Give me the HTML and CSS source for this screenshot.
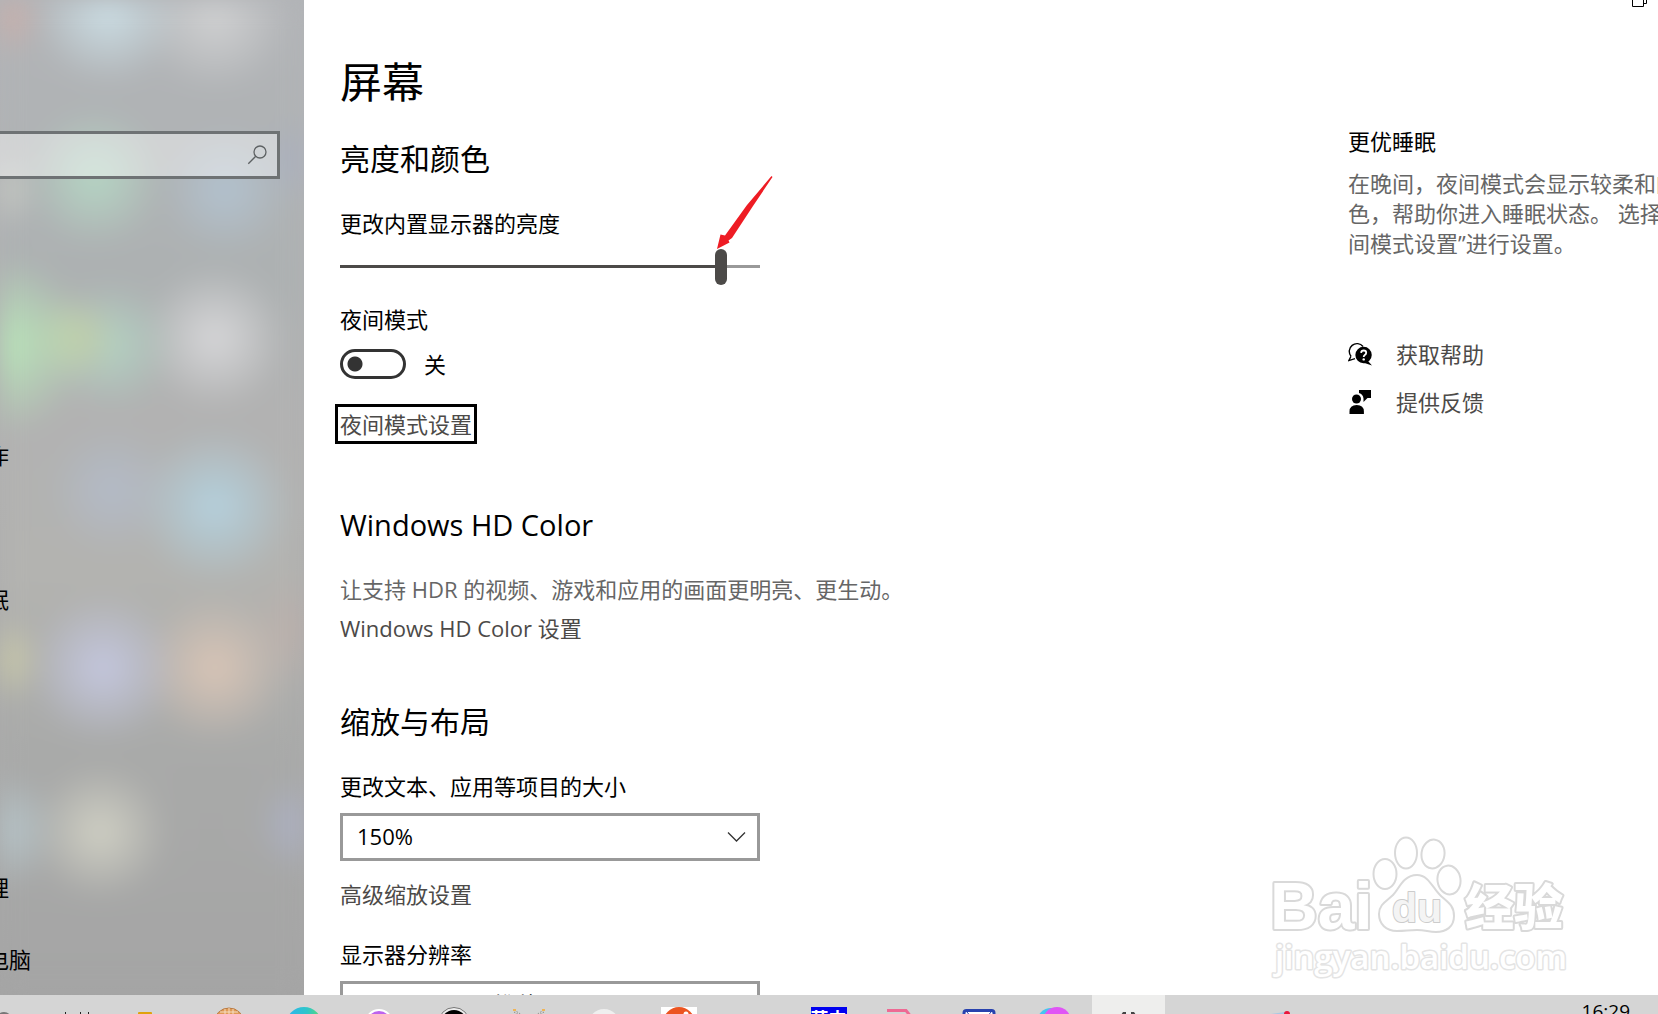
FILE: index.html
```html
<!DOCTYPE html>
<html lang="zh-CN">
<head>
    <meta charset="UTF-8">
    <meta name="viewport" content="width=device-width, initial-scale=1.0">
    <title>设置</title>
    <link rel="stylesheet" href="styles.css">
</head>
<body>
    <div class="window">
        <aside class="sidebar">
            <div class="search-box">
                <input type="text" aria-label="查找设置">
                <button class="search-btn" aria-label="搜索">
                    <svg width="20" height="20" viewBox="0 0 20 20" fill="none" stroke="#5d6163" stroke-width="1.3">
                        <circle cx="13" cy="7" r="6"/>
                        <path d="M8.7 11.3L1.3 18.7"/>
                    </svg>
                </button>
            </div>
            <nav class="nav">
                <a href="#">通知和操作</a>
                <a href="#">专注助手</a>
                <a href="#">电源和睡眠</a>
                <a href="#">电池</a>
                <a href="#">存储</a>
                <a href="#">平板模式</a>
                <a href="#">多任务处理</a>
                <a href="#">投影到此电脑</a>
            </nav>
        </aside>

        <div class="page">
            <div class="titlebar">
                <button class="restore-btn" aria-label="还原">
                    <svg width="16" height="8" viewBox="0 0 16 8" fill="none" stroke="#000">
                        <path d="M.5 0v6.5h11V0M11.5 3.5h3V0"/>
                    </svg>
                </button>
            </div>

            <div class="columns">
                <main class="content">
                    <h1>屏幕</h1>

                    <h2>亮度和颜色</h2>
                    <label class="label" for="brightness">更改内置显示器的亮度</label>
                    <div class="slider">
                        <input type="range" id="brightness" min="0" max="100" value="92">
                        <svg class="arrow" width="56" height="74" viewBox="0 0 56 74">
                            <path d="M54.5 0L30 29L8 59.500L3.500 58.500L0 73L12.500 66.500L11.500 64.500L15 62L36 30L55.500 1Z" fill="#ee1c24"/>
                        </svg>
                    </div>

                    <label class="label" for="night">夜间模式</label>
                    <div class="toggle-row">
                        <input type="checkbox" id="night" class="toggle">
                        <span>关</span>
                    </div>
                    <a href="#" class="link focused">夜间模式设置</a>

                    <h2 class="hd-title">Windows HD Color</h2>
                    <p class="desc">让支持 HDR 的视频、游戏和应用的画面更明亮、更生动。</p>
                    <a href="#" class="link">Windows HD Color 设置</a>

                    <h2 class="scale-title">缩放与布局</h2>
                    <label class="label" for="scale">更改文本、应用等项目的大小</label>
                    <div class="select-box">
                        <select id="scale">
                            <option>150%</option>
                        </select>
                        <svg class="chevron" width="20" height="12" viewBox="0 0 20 12" fill="none" stroke="#333" stroke-width="1.3">
                            <path d="M1 1.5L9.5 10L18 1.5"/>
                        </svg>
                    </div>
                    <a href="#" class="link scale-link">高级缩放设置</a>
                    <label class="label" for="resolution">显示器分辨率</label>
                    <div class="select-box">
                        <select id="resolution">
                            <option>1920 × 1080 (推荐)</option>
                        </select>
                    </div>
                </main>

                <section class="help">
                    <h3>更优睡眠</h3>
                    <p>在晚间，夜间模式会显示较柔和的颜<br>色，帮助你进入睡眠状态。 选择“夜<br>间模式设置”进行设置。</p>
                    <ul>
                        <li>
                            <svg width="24" height="24" viewBox="0 0 24 24">
                                <path d="M3 14.2A7.400 7.400 0 1 1 15 4.500M3 14.200L.8 18.600L7 16.600" fill="none" stroke="#000" stroke-width="1.4"/>
                                <path d="M15.600 4.800a8.200 8.200 0 1 1 -.1 16.400a8.200 8.200 0 0 1 .1-16.400zM20 19L24 23.500L16.500 21Z"/>
                                <path d="M13.100 10.800Q13.300 8.500 15.700 8.500Q18.200 8.500 18.200 10.700Q18.200 12 16.800 12.900Q15.700 13.600 15.700 15" fill="none" stroke="#fff" stroke-width="1.8"/>
                                <circle cx="15.700" cy="17.400" r="1.200" fill="#fff"/>
                            </svg>
                            <a href="#" class="link">获取帮助</a>
                        </li>
                        <li>
                            <svg width="24" height="24" viewBox="0 0 24 24">
                                <circle cx="8.500" cy="9" r="4.500"/>
                                <path d="M1.500 24v-2.500q0-6.500 7.200-6.500t7.200 6.500V24zM11 0h12v8h-3.500l-4 4V8.500Q15 4 11 3z"/>
                            </svg>
                            <a href="#" class="link">提供反馈</a>
                        </li>
                    </ul>
                </section>
            </div>
        </div>

        <svg class="watermark" width="302" height="148" viewBox="0 0 302 148">
            <g class="wm-shape">
                <ellipse cx="115" cy="39" rx="11.500" ry="15"/>
                <ellipse cx="136" cy="18" rx="11" ry="15.500"/>
                <ellipse cx="163" cy="19" rx="11.500" ry="14.500" transform="rotate(8 163 19)"/>
                <ellipse cx="179" cy="45" rx="11.500" ry="14.500" transform="rotate(-8 179 45)"/>
                <path d="M147 40C159 40 163 54 171 61S184 71 184 81C184 92 176 97 166 97C158 97 156 95 147 95S136 96 127 96C116 96 109 89 109 79C109 69 117 66 123 60S133 40 147 40Z"/>
            </g>
            <text class="wm-big" x="0" y="94">Bai</text>
            <text class="wm-du" x="122" y="87">du</text>
            <text class="wm-cn" x="195" y="90">经验</text>
            <text class="wm-url" x="5" y="134">jingyan.baidu.com</text>
        </svg>
    </div>

    <footer class="taskbar">
        <div class="tasks">
            <button aria-label="任务视图"><svg viewBox="0 0 36 36"><circle cx="18" cy="13" r="7" fill="none" stroke="#777" stroke-width="2"/></svg></button>
            <button aria-label="工具栏"><svg viewBox="0 0 36 36"><path d="M4.500 5v3M19.500 5v3M27.500 5v3" stroke="#222" stroke-width="1"/></svg></button>
            <button aria-label="文件资源管理器"><svg viewBox="0 0 36 36"><path d="M2 8V6q0-1 1-1h12q1 0 1 1v2z" fill="#e0a20d"/></svg></button>
            <button aria-label="浏览器"><svg viewBox="0 0 36 36"><circle cx="18" cy="16" r="15" fill="#e09a55" stroke="#b97a42"/><path d="M9 5h18M6 8h24M14 2v10M18 1v10M22 2v10" stroke="#f6dfc4" fill="none"/></svg></button>
            <button aria-label="Edge">
                <svg viewBox="0 0 36 36">
                    <defs>
                        <linearGradient id="edge"><stop offset="0" stop-color="#2cb5f0"/><stop offset=".6" stop-color="#2fc6c8"/><stop offset="1" stop-color="#5fdc6e"/></linearGradient>
                    </defs>
                    <circle cx="18" cy="18" r="18" fill="url(#edge)"/>
                </svg>
            </button>
            <button aria-label="播放器"><svg viewBox="0 0 36 36"><circle cx="18" cy="16" r="13" fill="#bd63ee" stroke="#fff" stroke-width="2"/></svg></button>
            <button aria-label="音乐"><svg viewBox="0 0 36 36"><circle cx="18" cy="16" r="15.500" fill="#eee" stroke="#777"/><circle cx="18" cy="16" r="13"/></svg></button>
            <button aria-label="编辑器"><svg viewBox="0 0 36 36"><path d="M3 3l5 3l4 3M33 3l-5 3l-4 3M3 5l7 4M33 5l-7 4" stroke="#8b8b85" stroke-dasharray="1.500 1.500" fill="none"/><path d="M2 2h3v2H2zM31 2h3v2h-3z" fill="#f0b455"/></svg></button>
            <button aria-label="云盘"><svg viewBox="0 0 36 36"><circle cx="18" cy="18" r="16" fill="#efefef"/></svg></button>
            <button aria-label="笔记"><svg viewBox="0 0 36 36"><path d="M0 0h36v36H0z" fill="#fff"/><circle cx="18" cy="16" r="16" fill="#ec5420"/><circle cx="25" cy="7" r="2.500" fill="#fff"/></svg></button>
            <button aria-label="空白"></button>
            <button aria-label="翻译"><span class="ime">英中</span></button>
            <button aria-label="文档"><svg viewBox="0 0 36 36"><path d="M1 3.500h19l4 5" fill="none" stroke="#ee6a94" stroke-width="3"/></svg></button>
            <button aria-label="扫描"><svg viewBox="0 0 36 36"><path d="M3 12V6q0-2.500 2.500-2.500h25q2.500 0 2.500 2.500v6z" fill="#fff" stroke="#2842ae" stroke-width="3"/><path d="M6 5l4 5M30 5l-4 5" stroke="#2842ae"/></svg></button>
            <button aria-label="相册"><svg viewBox="0 0 36 36"><circle cx="15" cy="15" r="14" fill="#45c5f0"/><circle cx="21" cy="14" r="14" fill="#e055f5"/></svg></button>
            <button aria-label="设置" class="active"><svg viewBox="0 0 36 36"><path d="M10 8l2-3h3v3zM20 8V5h3l2 3z" fill="#444"/></svg></button>
            <button aria-label="空白"></button>
            <button aria-label="画图"><svg viewBox="0 0 36 36"><path d="M10 7l14-2v3H12z" fill="#a9c8e4"/><circle cx="26" cy="7" r="3" fill="#e8173c"/></svg></button>
        </div>
        <time class="clock">16:29</time>
    </footer>
</body>
</html>
```
FILE: styles.css
```css
* {
    margin: 0;
    padding: 0;
    box-sizing: border-box;
}

body {
    display: flex;
    flex-direction: column;
    height: 100vh;
    overflow: hidden;
    background: #fff;
    color: #000;
    font-family: "Open Sans", "Noto Sans CJK SC", sans-serif;
    font-size: 22px;
    line-height: 30px;
}

button, input, select {
    font: inherit;
    color: inherit;
    border: none;
    background: none;
}

svg {
    display: block;
}

a {
    color: inherit;
    text-decoration: none;
}

.window {
    position: relative;
    flex: 1;
    min-height: 0;
    display: flex;
    overflow: hidden;
}

/* sidebar */
.sidebar {
    position: relative;
    z-index: 0;
    flex: 0 0 304px;
    padding-top: 131px;
    overflow: hidden;
    background: linear-gradient(#b2b4b7, #b0b0b0 50%, #a5a5a5);
}

/* desktop showing through the panel */
.sidebar::before {
    content: "";
    position: absolute;
    inset: 0;
    z-index: -1;
    filter: blur(12px);
    background:
        radial-gradient(circle at 0 15px, #cfaea8, transparent 45px),
        radial-gradient(circle at 108px 10px, #ccdfe6, transparent 75px),
        radial-gradient(circle at 215px 16px, #d0d1d2, transparent 75px),
        radial-gradient(circle at 95px 178px, #b5d6c4, transparent 70px),
        radial-gradient(circle at 0 190px, #cacdc6, transparent 40px),
        radial-gradient(circle at 225px 190px, #b2c2cf, transparent 65px),
        radial-gradient(circle at 304px 160px, #a9afc0, transparent 45px),
        radial-gradient(circle at 0 345px, #b9e8b9, transparent 90px),
        radial-gradient(circle at 75px 338px, #c2cda6, transparent 45px),
        radial-gradient(circle at 110px 345px, #b2d2c3, transparent 65px),
        radial-gradient(circle at 215px 338px, #d7d7d9, transparent 72px),
        radial-gradient(circle at 215px 506px, #b4d1de, transparent 78px),
        radial-gradient(circle at 112px 490px, #b3bbc8, transparent 65px),
        radial-gradient(circle at 0 660px, #cdcda8, transparent 45px),
        radial-gradient(circle at 103px 668px, #c4c7df, transparent 75px),
        radial-gradient(circle at 215px 668px, #d9c5b6, transparent 75px),
        radial-gradient(circle at 304px 630px, #bdb0ab, transparent 60px),
        radial-gradient(circle at 0 830px, #b8c8cd, transparent 60px),
        radial-gradient(circle at 100px 832px, #d0d0c4, transparent 68px),
        radial-gradient(circle at 304px 825px, #adb2c8, transparent 50px),
        linear-gradient(#b2b4b7, #adb1b2 28%, #b2b2b2 42%, #b3b3b0 58%, #a9aaa9 75%, #a5a5a5);
}

.search-box {
    display: flex;
    align-items: center;
    height: 48px;
    margin: 0 24px 0 -20px;
    border: 3px solid #6e7274;
    background: rgba(255, 255, 255, 0.42);
}

.search-box input {
    flex: 1;
    min-width: 0;
    padding-left: 30px;
}

.search-btn {
    padding-right: 10px;
}

.nav {
    margin: 240px 0 0 -101px;
}

.nav a {
    display: block;
    line-height: 72px;
    white-space: nowrap;
}

/* page */
.page {
    flex: 1;
    min-width: 0;
}

.titlebar {
    display: flex;
    justify-content: flex-end;
    align-items: flex-start;
    height: 54px;
    padding-right: 10px;
}

.columns {
    display: flex;
    justify-content: space-between;
    padding-left: 36px;
}

.content {
    display: flex;
    flex-direction: column;
    align-items: flex-start;
}

h1, h2, h3 {
    font-weight: 400;
}

h1 {
    font-size: 42px;
    line-height: 56px;
}

h2 {
    margin: 29px 0;
    font-size: 30px;
    line-height: 40px;
}

h3 {
    font-size: 22px;
    line-height: 30px;
}

.label {
    display: block;
}

.slider {
    position: relative;
    width: 420px;
    height: 36px;
    margin: 11px 0 19px;
}

.slider input {
    display: block;
    width: 100%;
    height: 36px;
    appearance: none;
    background: linear-gradient(90deg, #4c4a48 90%, #999 90%) 0 16px / 100% 3px no-repeat;
}

.slider input::-webkit-slider-thumb {
    appearance: none;
    width: 12px;
    height: 36px;
    border-radius: 6px;
    background: #4c4a48;
}

.arrow {
    position: absolute;
    left: 377px;
    top: -73px;
}

.toggle-row {
    display: flex;
    align-items: center;
    gap: 18px;
    margin: 15px 0 25px;
}

.toggle {
    appearance: none;
    width: 66px;
    height: 30px;
    border: 3px solid #333;
    border-radius: 15px;
    background: radial-gradient(circle at 12px 12px, #333 7px, transparent 8px);
}

.link {
    color: #4c4a48;
}

.focused {
    margin-left: -5px;
    padding: 2px;
    border: 3px solid #000;
}

.hd-title {
    margin-top: 61px;
    font-size: 29px;
}

.desc {
    margin-bottom: 9px;
    color: #666;
}

.scale-title {
    margin-top: 59px;
}

.select-box {
    position: relative;
    width: 420px;
    margin: 12px 0 18px;
}

.select-box select {
    display: block;
    width: 100%;
    height: 48px;
    padding: 0 14px 2px;
    appearance: none;
    border: 3px solid #999;
    background: #fff;
}

.chevron {
    position: absolute;
    right: 13px;
    top: 18px;
    pointer-events: none;
}

.scale-link {
    margin-bottom: 30px;
}

.help {
    flex: 0 0 310px;
    padding-top: 72px;
    overflow: hidden;
    white-space: nowrap;
}

.help p {
    margin: 12px 0 72px;
    color: #666;
}

.help ul {
    list-style: none;
}

.help li {
    display: flex;
    align-items: center;
    gap: 24px;
    height: 48px;
}

/* watermark */
.watermark {
    position: absolute;
    right: 86px;
    bottom: 12px;
    pointer-events: none;
    fill: #fff;
    stroke: #d9d9d9;
    stroke-width: 4px;
    stroke-linejoin: round;
    paint-order: stroke;
}

.wm-shape {
    stroke-width: 2px;
    paint-order: normal;
}

.wm-big, .wm-du {
    font-family: "Liberation Sans", sans-serif;
    font-weight: 700;
}

.wm-big {
    font-size: 66px;
}

.wm-du {
    font-size: 41px;
    fill: #f4f4f4;
    stroke: #ccc;
    stroke-width: 2px;
}

.wm-cn {
    font-size: 49px;
    font-weight: 900;
}

.wm-url {
    font-size: 33px;
    font-weight: 600;
    stroke: #e4e4e4;
    stroke-width: 3px;
}

/* taskbar */
.taskbar {
    display: flex;
    justify-content: space-between;
    height: 19px;
    padding-right: 28px;
    overflow: hidden;
    background: #d5d5d5;
}

.tasks {
    display: flex;
    gap: 2px;
    margin-left: -33px;
}

.tasks button {
    display: flex;
    justify-content: center;
    width: 73px;
    height: 60px;
    padding-top: 12px;
}

.tasks svg {
    width: 36px;
    height: 36px;
}

.tasks .active {
    background: #eeeeed;
}

.ime {
    width: 36px;
    height: 36px;
    background: #0000f0;
    color: #fff;
    font-size: 18px;
    font-weight: 700;
    line-height: 24px;
}

.clock {
    font-size: 19px;
    line-height: 32px;
}
```
